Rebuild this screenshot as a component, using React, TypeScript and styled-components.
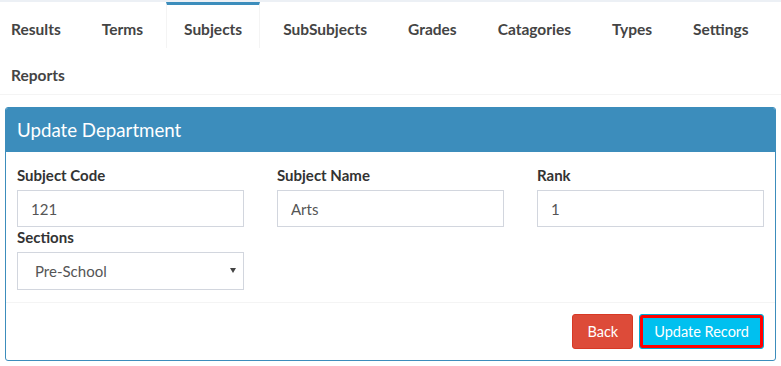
import styled, { createGlobalStyle } from 'styled-components';

const GlobalStyle = createGlobalStyle`
  html, body {
    margin: 0;
    padding: 0;
    background: #fff;
    font-family: Lato, "Open Sans", sans-serif;
    color: #333;
  }
`;

const Page = styled.div`
  border-top: 2px solid #ecf0f5;
  background: #fff;
`;

/** Tabs */
const TabBar = styled.ul`
  display: flex;
  flex-wrap: wrap;
  list-style: none;
  margin: 0 0 0 -7px;
  padding: 0;
  border-bottom: 1px solid #f4f4f4;
`;

const Tab = styled.li<{ $active?: boolean }>`
  margin-right: 5px;
  padding: 14px 17px 9px;
  line-height: 20px;
  font-size: 15.5px;
  font-weight: 700;
  color: #444;
  border-top: 3px solid ${({ $active }) => ($active ? '#3c8dbc' : 'transparent')};
  border-left: 1px solid ${({ $active }) => ($active ? '#f4f4f4' : 'transparent')};
  border-right: 1px solid ${({ $active }) => ($active ? '#f4f4f4' : 'transparent')};
  cursor: pointer;
`;

/** Panel */
const Panel = styled.div`
  margin: 12px 5px 0;
  border: 1px solid #3c8dbc;
  border-radius: 3px;
  overflow: hidden;
`;

const PanelHeader = styled.div`
  background: #3c8dbc;
  color: #fff;
  font-size: 18.7px;
  line-height: 20px;
  padding: 12px 11px;
`;

const PanelBody = styled.div`
  display: grid;
  grid-template-columns: repeat(3, 1fr);
  column-gap: 33px;
  padding: 13px 11px 12px;
`;

const Field = styled.div`
  display: flex;
  flex-direction: column;
`;

const Label = styled.label`
  font-size: 15px;
  font-weight: 700;
  line-height: 20px;
  margin-bottom: 5px;
  color: #333;
`;

const TextInput = styled.input`
  box-sizing: border-box;
  height: 37px;
  border: 1px solid #d2d6de;
  padding: 0 13px;
  font-family: inherit;
  font-size: 15px;
  color: #555;
  outline: none;
`;

const SelectWrap = styled.div`
  position: relative;
`;

const Select = styled.select`
  box-sizing: border-box;
  width: 100%;
  height: 38px;
  border: 1px solid #d2d6de;
  padding: 0 20px 0 17px;
  font-family: inherit;
  font-size: 15px;
  color: #555;
  background: #fff;
  -webkit-appearance: none;
  appearance: none;
  outline: none;
`;

const Caret = styled.span`
  position: absolute;
  right: 8px;
  top: 16px;
  width: 0;
  height: 0;
  border-left: 3px solid transparent;
  border-right: 3px solid transparent;
  border-top: 5px solid #444;
  pointer-events: none;
`;

const PanelFooter = styled.div`
  display: flex;
  justify-content: flex-end;
  gap: 6px;
  border-top: 1px solid #f4f4f4;
  padding: 11px 11px;
`;

const Button = styled.button<{ $variant: 'danger' | 'info' }>`
  box-sizing: border-box;
  height: 35px;
  padding: 0 14px;
  border-radius: 3px;
  font-family: inherit;
  font-size: 14.5px;
  color: #fff;
  cursor: pointer;
  background: ${({ $variant }) => ($variant === 'danger' ? '#dd4b39' : '#00c0ef')};
  border: 1px solid ${({ $variant }) => ($variant === 'danger' ? '#d73925' : '#00acd6')};
  box-shadow: ${({ $variant }) => ($variant === 'info' ? 'inset 0 0 0 3px #ff0000' : 'none')};
`;

const tabs = ['Results', 'Terms', 'Subjects', 'SubSubjects', 'Grades', 'Catagories', 'Types', 'Settings', 'Reports'];

export default function App() {
  return (
    <Page>
      <GlobalStyle />
      <TabBar>
        {tabs.map((t) => (
          <Tab key={t} $active={t === 'Subjects'}>
            {t}
          </Tab>
        ))}
      </TabBar>

      <Panel>
        <PanelHeader>Update Department</PanelHeader>
        <PanelBody>
          <Field>
            <Label>Subject Code</Label>
            <TextInput defaultValue="121" />
          </Field>
          <Field>
            <Label>Subject Name</Label>
            <TextInput defaultValue="Arts" />
          </Field>
          <Field>
            <Label>Rank</Label>
            <TextInput defaultValue="1" />
          </Field>
          <Field>
            <Label>Sections</Label>
            <SelectWrap>
              <Select defaultValue="Pre-School">
                <option>Pre-School</option>
                <option>Primary</option>
                <option>Secondary</option>
              </Select>
              <Caret />
            </SelectWrap>
          </Field>
        </PanelBody>
        <PanelFooter>
          <Button $variant="danger">Back</Button>
          <Button $variant="info">Update Record</Button>
        </PanelFooter>
      </Panel>
    </Page>
  );
}
